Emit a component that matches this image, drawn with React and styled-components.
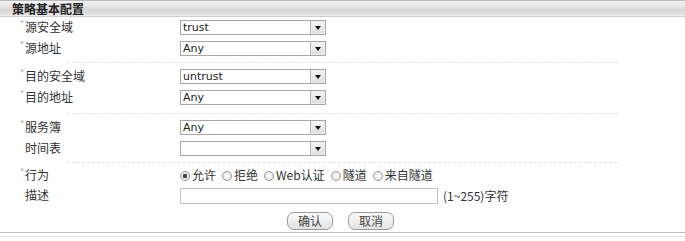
import { createGlobalStyle, styled } from 'styled-components';

const GlobalStyle = createGlobalStyle`
  html, body {
    margin: 0;
    padding: 0;
    background: #fff;
  }
  body {
    font-family: "Noto Sans CJK SC", "Liberation Sans", sans-serif;
    font-size: 12px;
    color: #333;
  }
`;

const Panel = styled.div`
  width: 685px;
  height: 241px;
  overflow: hidden;
  display: flex;
  flex-direction: column;
`;

const TitleBar = styled.div`
  height: 15px;
  border-top: 1px solid #b9b9b9;
  border-bottom: 1px solid #cfcfcf;
  background: linear-gradient(#f4f4f4 0%, #e6e6e6 35%, #d6d6d6 60%, #e2e2e2 85%, #ececec 100%);
  padding-left: 12px;
  display: flex;
  align-items: center;
  font-weight: bold;
  font-size: 12px;
  line-height: 15px;
  color: #222;
`;

const Body = styled.div`
  display: flex;
  flex-direction: column;
`;

const Row = styled.div`
  display: grid;
  grid-template-columns: 180px 1fr;
  align-items: center;
  height: ${p => p.$h || 21}px;
`;

const Label = styled.div`
  padding-left: 20px;
  display: flex;
  align-items: center;
  line-height: 14px;
  margin-top: -2px;
`;

const Star = styled.span`
  width: 5px;
  font-size: 9px;
  color: #aaa;
  align-self: flex-start;
  line-height: 8px;
  visibility: ${p => (p.$show ? 'visible' : 'hidden')};
`;

const Divider = styled.div`
  margin: ${p => p.$gap || '3px 0 3px 67px'};
  width: 550px;
  border-top: 1px dashed #e0e0e0;
`;

const SelectBox = styled.div`
  box-sizing: border-box;
  width: 146px;
  height: 15px;
  border: 1px solid #a7a7a7;
  background: #fff;
  display: flex;
  align-items: center;
  justify-content: space-between;
  font-family: "DejaVu Sans", Verdana, sans-serif;
  font-size: 11px;
  color: #222;
`;

const SelectText = styled.span`
  padding-left: 2px;
  line-height: 13px;
`;

const ArrowBtn = styled.span`
  box-sizing: border-box;
  width: 15px;
  height: 13px;
  border-left: 1px solid #b5b5b5;
  background: linear-gradient(#f6f6f6, #dcdcdc);
  box-shadow: inset 0 0 0 1px #eee;
  display: flex;
  align-items: center;
  justify-content: center;
  &::after {
    content: '';
    border-left: 3px solid transparent;
    border-right: 3px solid transparent;
    border-top: 4px solid #111;
    margin-top: 1px;
  }
`;

const Radios = styled.div`
  display: flex;
  align-items: center;
  gap: 6px;
  margin-top: -2px;
`;

const RadioItem = styled.span`
  display: flex;
  align-items: center;
  gap: 2px;
  color: #333;
`;

const Dot = styled.span`
  box-sizing: border-box;
  width: 10px;
  height: 10px;
  border-radius: 50%;
  border: 1px solid #999;
  margin-top: 2px;
  background: radial-gradient(circle, ${p => (p.$on ? '#444 0 2px, #e8e8e8 2.5px' : '#fafafa 0, #e0e0e0 100%')});
`;

const InputLine = styled.div`
  display: flex;
  align-items: center;
  gap: 5px;
`;

const TextBox = styled.div`
  box-sizing: border-box;
  width: 258px;
  height: 16px;
  border: 1px solid #c4c4c4;
  background: #fff;
`;

const Hint = styled.span`
  color: #333;
  margin-top: -2px;
`;

const Actions = styled.div`
  display: flex;
  justify-content: flex-start;
  gap: 15px;
  padding-left: 287px;
  margin-top: 6px;
`;

const Btn = styled.div`
  box-sizing: border-box;
  width: 46px;
  height: 18px;
  border: 1px solid #9a9a9a;
  border-radius: 7px;
  background: linear-gradient(#fbfbfb, #e3e3e3);
  display: flex;
  align-items: center;
  justify-content: center;
  font-size: 12px;
  color: #444;
  padding-bottom: 2px;
`;

const Footer = styled.div`
  margin-top: 2px;
  border-top: 1px solid #c2c2c2;
  height: 3px;
  border-bottom: 1px solid #e6e6e6;
`;

function Select({ value }) {
  return (
    <SelectBox>
      <SelectText>{value}</SelectText>
      <ArrowBtn />
    </SelectBox>
  );
}

function Field({ label, required, h, children }) {
  return (
    <Row $h={h}>
      <Label>
        <Star $show={required}>*</Star>
        {label}
      </Label>
      <div>{children}</div>
    </Row>
  );
}

const actions = [
  { text: '允许', on: true },
  { text: '拒绝' },
  { text: 'Web认证' },
  { text: '隧道' },
  { text: '来自隧道' },
];

export default function App() {
  return (
    <>
      <GlobalStyle />
      <Panel>
        <TitleBar>策略基本配置</TitleBar>
        <Body>
          <Field label="源安全域" required><Select value="trust" /></Field>
          <Field label="源地址" required><Select value="Any" /></Field>
          <Divider />
          <Field label="目的安全域" required><Select value="untrust" /></Field>
          <Field label="目的地址" required><Select value="Any" /></Field>
          <Divider $gap="5px 0 3px 67px" />
          <Field label="服务簿" required><Select value="Any" /></Field>
          <Field label="时间表"><Select value="" /></Field>
          <Divider $gap="3px 0 2px 67px" />
          <Field label="行为" required>
            <Radios>
              {actions.map(a => (
                <RadioItem key={a.text}>
                  <Dot $on={a.on} />
                  {a.text}
                </RadioItem>
              ))}
            </Radios>
          </Field>
          <Field label="描述" h={20}>
            <InputLine>
              <TextBox />
              <Hint>(1~255)字符</Hint>
            </InputLine>
          </Field>
          <Actions>
            <Btn>确认</Btn>
            <Btn>取消</Btn>
          </Actions>
          <Footer />
        </Body>
      </Panel>
    </>
  );
}
